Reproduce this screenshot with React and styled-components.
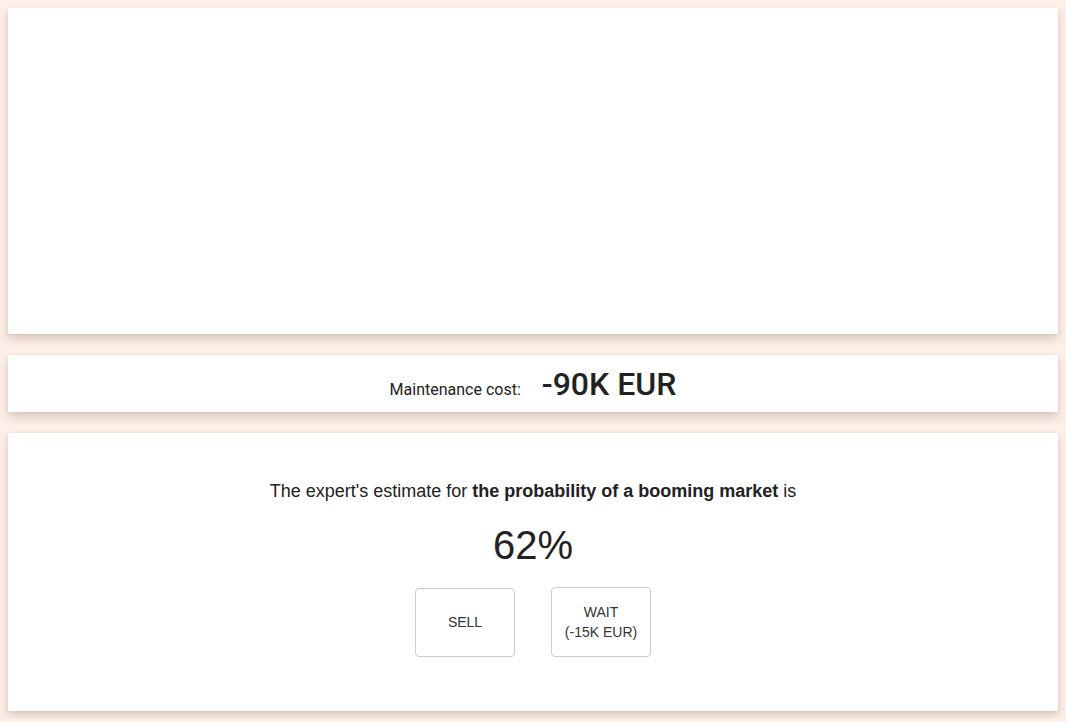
import React from 'react';
import styled, { createGlobalStyle } from 'styled-components';

const GlobalStyle = createGlobalStyle`
  html, body {
    margin: 0;
    padding: 0;
    background: #fdf0e8;
  }
  body {
    padding: 8px;
    font-family: "Liberation Sans", Arial, sans-serif;
    color: #212529;
  }
`;

const Page = styled.div`
  display: flex;
  flex-direction: column;
  gap: 21px;
`;

const Card = styled.section`
  background: #fff;
  box-shadow: 0 5px 10px rgba(80, 50, 30, 0.2), 0 1px 3px rgba(80, 50, 30, 0.08);
  height: ${props => props.height}px;
  box-sizing: border-box;
`;

const CostRow = styled(Card)`
  display: flex;
  justify-content: center;
  align-items: baseline;
  gap: 21px;
  padding-top: 9px;
  font-family: Roboto, "Liberation Sans", sans-serif;
`;

const CostLabel = styled.span`
  font-size: 16px;
  color: #222;
`;

const CostValue = styled.span`
  font-size: 32px;
  line-height: 40px;
  font-weight: 500;
  color: #222;
`;

const Question = styled(Card)`
  display: flex;
  flex-direction: column;
  align-items: center;
  padding-top: 45px;
`;

const Prompt = styled.p`
  margin: 0;
  font-size: 18px;
  line-height: 27px;
  color: #222;

  strong {
    font-weight: bold;
  }
`;

const Estimate = styled.div`
  margin-top: 16px;
  font-size: 40px;
  line-height: 48px;
  color: #222;
`;

const Buttons = styled.div`
  display: flex;
  align-items: flex-end;
  gap: 36px;
  margin-top: 18px;
`;

const Choice = styled.button`
  width: 100px;
  height: ${props => (props.tall ? 70 : 69)}px;
  padding: ${props => (props.tall ? '1px 6px' : '0 6px 2px')};
  background: #fff;
  border: 1px solid #ccc;
  border-radius: 4px;
  font-family: "Liberation Sans", Arial, sans-serif;
  font-size: 14px;
  line-height: 20px;
  color: #333;
  cursor: pointer;
`;

export default function App() {
  return (
    <>
      <GlobalStyle />
      <Page>
        <Card height={326} />
        <CostRow height={57}>
          <CostLabel>Maintenance cost:</CostLabel>
          <CostValue>-90K EUR</CostValue>
        </CostRow>
        <Question height={278}>
          <Prompt>
            The expert's estimate for <strong>the probability of a booming market</strong> is
          </Prompt>
          <Estimate>62%</Estimate>
          <Buttons>
            <Choice>SELL</Choice>
            <Choice tall>WAIT<br />(-15K EUR)</Choice>
          </Buttons>
        </Question>
      </Page>
    </>
  );
}
